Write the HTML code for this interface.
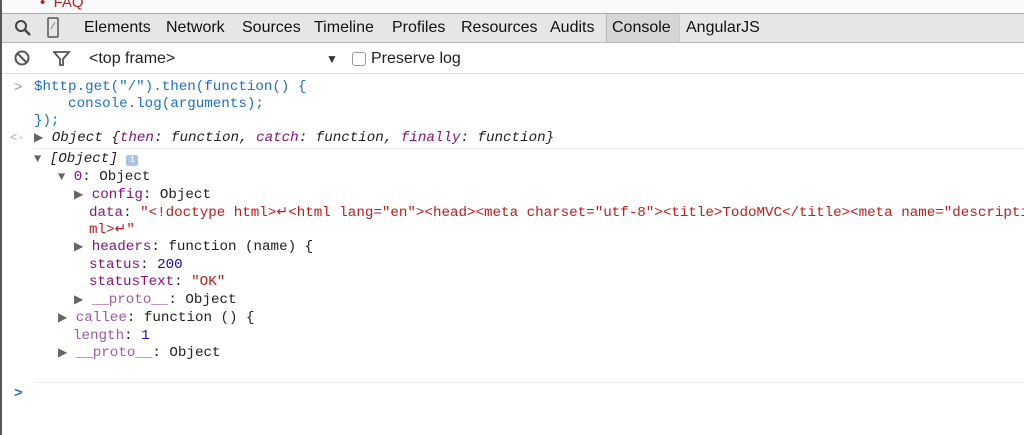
<!DOCTYPE html>
<html><head><style>
body{margin:0;width:1024px;height:435px;overflow:hidden;background:#fff;font-family:"Liberation Sans",sans-serif;position:relative;border-left:2px solid #555;box-sizing:border-box}
.abs{position:absolute;white-space:pre}
.top{position:absolute;left:0;top:0;width:1024px;height:13px;background:#fafafa;border-bottom:1px solid #aaa}
.tabs{position:absolute;left:0;top:14px;width:1024px;height:28px;background:#e6e6e6;border-bottom:1px solid #b8b8b8}
.tab{position:absolute;top:5px;font-size:16px;color:#111}
.fbar{position:absolute;left:0;top:43px;width:1024px;height:30px;border-bottom:1px solid #e0e0e0}
.m{position:absolute;font-family:"Liberation Mono",monospace;font-size:14.2px;white-space:pre;color:#222;line-height:17px}
.b{color:#1a6fd0}.p{color:#881280}.pl{color:#a05aa8}.r{color:#c41a16}.n{color:#1c00cf}
.tri{color:#666;font-size:12px}
</style></head><body>
<div class="top"><span class="abs" style="left:38px;top:-6px;font-size:15px;color:#b22">•&nbsp;&nbsp;FAQ</span></div>
<div class="tabs">
<svg class="abs" style="left:12px;top:5px" width="18" height="18"><circle cx="7" cy="7" r="5" fill="none" stroke="#444" stroke-width="2"/><line x1="11" y1="11" x2="16" y2="16" stroke="#444" stroke-width="2.5"/></svg>
<svg class="abs" style="left:45px;top:3px" width="12" height="22"><rect x="1" y="1" width="10" height="19" rx="1" fill="none" stroke="#555" stroke-width="1.5"/><line x1="4" y1="12" x2="8" y2="5" stroke="#888"/></svg>
<span class="tab" style="left:82px">Elements</span>
<span class="tab" style="left:164px">Network</span>
<span class="tab" style="left:240px">Sources</span>
<span class="tab" style="left:312px">Timeline</span>
<span class="tab" style="left:390px">Profiles</span>
<span class="tab" style="left:459px">Resources</span>
<span class="tab" style="left:548px">Audits</span>
<div class="abs" style="left:604px;top:0;width:72px;height:28px;background:#d6d6d6;border-left:1px solid #bbb;border-right:1px solid #ccc"></div>
<span class="tab" style="left:610px">Console</span>
<span class="tab" style="left:684px">AngularJS</span>
</div>
<div class="fbar">
<svg class="abs" style="left:12px;top:7px" width="18" height="18"><circle cx="8" cy="8" r="6.5" fill="none" stroke="#555" stroke-width="2"/><line x1="3.5" y1="3.5" x2="12.5" y2="12.5" stroke="#555" stroke-width="2"/></svg>
<svg class="abs" style="left:51px;top:8px" width="18" height="16"><path d="M1 1H16L10 8V14H7V8Z" fill="none" stroke="#555" stroke-width="1.8"/></svg>
<span class="abs" style="left:87px;top:7px;font-size:16px;color:#222">&lt;top frame&gt;</span>
<span class="abs" style="left:324px;top:9px;font-size:12px;color:#333">▼</span>
<div class="abs" style="left:350px;top:9px;width:12px;height:12px;border:1px solid #999;border-radius:3px;background:#fff"></div>
<span class="abs" style="left:369px;top:7px;font-size:16px;color:#222">Preserve log</span>
</div>
<div class="m" style="left:12px;top:80px;color:#999">&gt;</div>
<div class="m b" style="left:32px;top:79px">$http.get("/").then(function() {
    console.log(arguments);
});</div>
<div class="m" style="left:8px;top:130px;color:#aaa;font-size:12px">&lt;·</div>
<div class="m" style="left:32px;top:130px"><span class="tri">▶</span> <i>Object {<span class="p">then</span>: function, <span class="p">catch</span>: function, <span class="p">finally</span>: function}</i></div>
<div class="abs" style="left:32px;top:148px;width:992px;height:1px;background:#eee"></div>
<div class="m" style="left:32px;top:151px"><span class="tri">▼</span> <i>[Object]</i> <span style="background:#aac4ee;color:#fff;font-size:10px;border-radius:2px;padding:0 3px">i</span></div>
<div class="m" style="left:56px;top:169px"><span class="tri">▼</span> <span class="p">0</span>: Object</div>
<div class="m" style="left:72px;top:187px"><span class="tri">▶</span> <span class="p">config</span>: Object</div>
<div class="m" style="left:87px;top:205px"><span class="p">data</span>: <span class="r">"&lt;!doctype html&gt;↵&lt;html lang="en"&gt;&lt;head&gt;&lt;meta charset="utf-8"&gt;&lt;title&gt;TodoMVC&lt;/title&gt;&lt;meta name="description</span></div>
<div class="m r" style="left:87px;top:222px">ml&gt;↵"</div>
<div class="m" style="left:72px;top:239px"><span class="tri">▶</span> <span class="p">headers</span>: function (name) {</div>
<div class="m" style="left:87px;top:257px"><span class="p">status</span>: <span class="n">200</span></div>
<div class="m" style="left:87px;top:274px"><span class="p">statusText</span>: <span class="r">"OK"</span></div>
<div class="m" style="left:72px;top:292px"><span class="tri">▶</span> <span class="pl">__proto__</span>: Object</div>
<div class="m" style="left:56px;top:310px"><span class="tri">▶</span> <span class="pl">callee</span>: function () {</div>
<div class="m" style="left:71px;top:328px"><span class="pl">length</span>: <span class="n">1</span></div>
<div class="m" style="left:56px;top:345px"><span class="tri">▶</span> <span class="pl">__proto__</span>: Object</div>
<div class="abs" style="left:32px;top:382px;width:992px;height:1px;background:#eee"></div>
<div class="m b" style="left:12px;top:386px;font-weight:bold">&gt;</div>
</body></html>
